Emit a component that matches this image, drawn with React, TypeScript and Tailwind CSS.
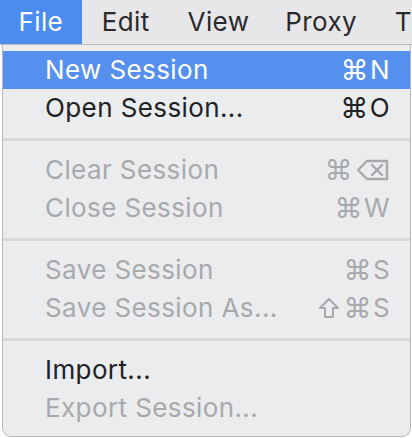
import React from 'react';

type Item = { label: string; shortcut?: React.ReactNode; disabled?: boolean; active?: boolean };

const Cmd = () => <span className="mr-[1px] text-[28px]">⌘</span>;

function DeleteIcon() {
  return (
    <svg width="34" height="22" viewBox="0 0 34 22" fill="none" stroke="currentColor" strokeWidth="2.4" strokeLinejoin="round" strokeLinecap="round">
      <path d="M11 2 H31 V20 H11 L2 11 Z" />
      <path d="M16 6 L26 16 M26 6 L16 16" />
    </svg>
  );
}

function ShiftIcon() {
  return (
    <svg width="22" height="22" viewBox="0 0 22 22" fill="none" stroke="currentColor" strokeWidth="2" strokeLinejoin="round">
      <path d="M11 2 L20 11 H15 V20 H7 V11 H2 Z" />
    </svg>
  );
}

const groups: Item[][] = [
  [
    { label: 'New Session', shortcut: <><Cmd />N</>, active: true },
    { label: 'Open Session...', shortcut: <><Cmd />O</> },
  ],
  [
    { label: 'Clear Session', shortcut: <><Cmd /><span className="ml-[2px]"><DeleteIcon /></span></>, disabled: true },
    { label: 'Close Session', shortcut: <><Cmd />W</>, disabled: true },
  ],
  [
    { label: 'Save Session', shortcut: <><Cmd />S</>, disabled: true },
    { label: 'Save Session As...', shortcut: <><span className="mr-[3px]"><ShiftIcon /></span><Cmd />S</>, disabled: true },
  ],
  [
    { label: 'Import...' },
    { label: 'Export Session...', disabled: true },
  ],
];

export default function App() {
  return (
    <div className="w-[412px] h-[438px] bg-white overflow-hidden text-[26px] leading-none tracking-[0.4px]" style={{ fontFamily: 'Inter, "Liberation Sans", sans-serif' }}>
      {/* Menu bar */}
      <div className="h-[45px] flex items-stretch bg-[#e7e7ea] border-b border-[#b9b9bc] text-[#2a2a2c]">
        <div className="w-[83px] flex items-center justify-center bg-[#4b8cf0] text-white">File</div>
        <div className="w-[87px] flex items-center pl-[20px]">Edit</div>
        <div className="w-[99px] flex items-center pl-[20px]">View</div>
        <div className="w-[111px] flex items-center pl-[20px]">Proxy</div>
        <div className="flex items-center pl-[20px]">T</div>
      </div>

      {/* Dropdown */}
      <div className="ml-[2px] w-[409px] h-[392px] bg-[#ebecee] border-l border-r border-b border-[#b8b8bb] rounded-b-[9px] pt-[6px]">
        {groups.map((group, gi) => (
          <div key={gi}>
            {gi > 0 && (
              <div className="h-[24px] flex items-center">
                <div className="w-full h-[3px] bg-[#d7d8da]" />
              </div>
            )}
            {group.map((item) => (
              <div
                key={item.label}
                className={`h-[38px] flex items-center justify-between pl-[42px] pr-[20px] ${
                  item.active ? 'bg-[#5590ee] text-white' : item.disabled ? 'text-[#a8a9ac]' : 'text-[#222224]'
                }`}
              >
                <span>{item.label}</span>
                {item.shortcut && <span className="flex items-center">{item.shortcut}</span>}
              </div>
            ))}
          </div>
        ))}
      </div>
    </div>
  );
}
